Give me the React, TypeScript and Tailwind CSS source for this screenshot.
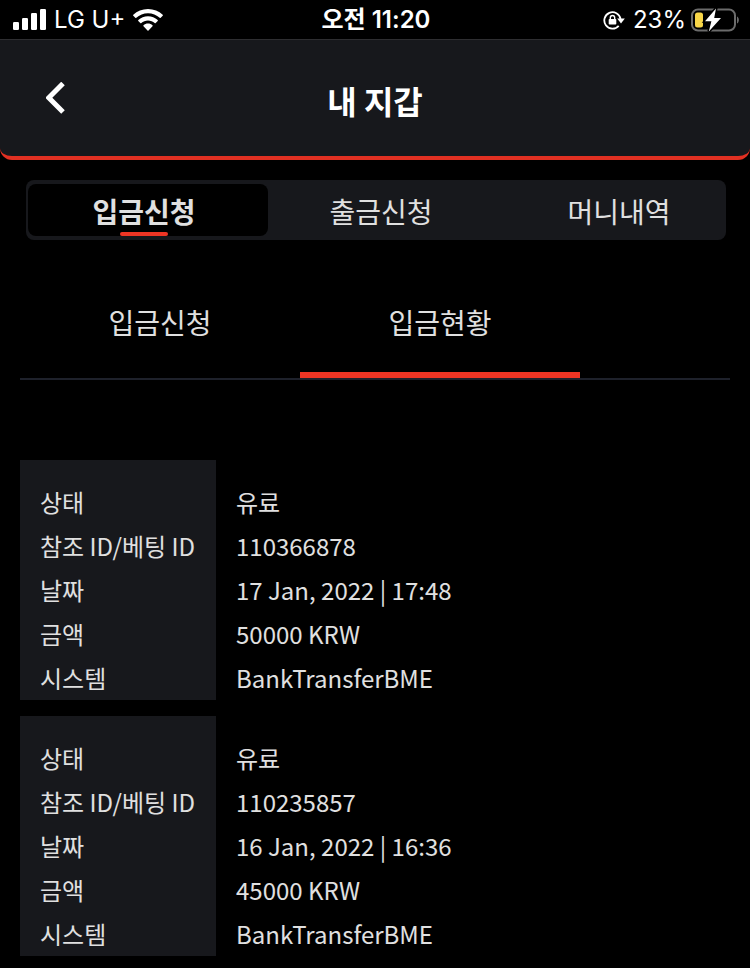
/**
 * Wallet page: deposit status list
 */

const TABS = [
  { label: "입금신청", active: true, className: "rounded-lg bg-black pr-2 font-bold" },
  { label: "출금신청", active: false, className: "" },
  { label: "머니내역", active: false, className: "pl-5" },
];

const SUB_TABS = [
  { label: "입금신청", active: false },
  { label: "입금현황", active: true },
];

const DEPOSITS = [
  { status: "유료", id: "110366878", date: "17 Jan, 2022 | 17:48", amount: "50000 KRW", system: "BankTransferBME" },
  { status: "유료", id: "110235857", date: "16 Jan, 2022 | 16:36", amount: "45000 KRW", system: "BankTransferBME" },
];

function StatusBar() {
  return (
    <div className="grid h-10 grid-cols-[1fr_auto_1fr] items-center border-b border-[#2e2e31] bg-black pr-2.5 pl-3 font-[Inter,'Noto_Sans_CJK_KR',sans-serif] text-2xl text-white">
      <div className="flex items-center gap-2">
        <svg className="h-6 w-[34px]" viewBox="0 0 34 24" fill="currentColor" aria-hidden="true">
          <rect x="1" y="14" width="6" height="8" rx="1.2" />
          <rect x="10" y="10" width="6" height="12" rx="1.2" />
          <rect x="19" y="5" width="6" height="17" rx="1.2" />
          <rect x="28" y="1" width="6" height="21" rx="1.2" />
        </svg>
        <span>LG U+</span>
        <svg className="h-[22px] w-[30px]" viewBox="0 0 30 22" fill="currentColor" aria-hidden="true">
          <path d="M15 0C9.300 0 4.100 2.200.3 5.800a.7.7 0 0 0 0 1l2 2c.3.300.7.300 1 0C6.400 5.900 10.500 4.200 15 4.200s8.600 1.700 11.700 4.600c.3.300.7.300 1 0l2-2c.3-.3.300-.7 0-1C25.900 2.200 20.700 0 15 0Z" />
          <path d="M15 7.300c-3.700 0-7.100 1.400-9.700 3.700-.3.300-.3.700 0 1l2 2c.3.300.7.300 1 0 1.800-1.600 4.100-2.500 6.700-2.500s4.900.9 6.700 2.500c.3.300.7.300 1 0l2-2c.3-.3.300-.7 0-1-2.600-2.300-6-3.700-9.700-3.700Z" />
          <path d="M15 14.600c-1.700 0-3.300.6-4.500 1.600-.3.300-.3.700 0 1l4 4.200c.3.300.7.300 1 0l4-4.200c.3-.3.300-.7 0-1-1.200-1-2.800-1.600-4.500-1.600Z" />
        </svg>
      </div>
      <span className="font-semibold">오전 11:20</span>
      <div className="flex items-center justify-end gap-1">
        <svg className="mr-1 h-5 w-[22px]" viewBox="0 0 22 20" fill="none" stroke="currentColor" strokeWidth="1.8" aria-hidden="true">
          <path d="M17.600 9A8.200 8.200 0 1 0 15.700 15.800" />
          <path d="M14.200 8.500h7.600L18 13.600Z" fill="currentColor" stroke="none" />
          <rect x="5.700" y="9" width="7.600" height="5.600" rx=".8" fill="currentColor" stroke="none" />
          <path d="M7.300 9.500V7.700a2.200 2.200 0 0 1 4.400 0v1.800" strokeWidth="1.400" />
        </svg>
        <span>23%</span>
        <svg className="h-6 w-[50px]" viewBox="0 0 50 24" aria-hidden="true">
          <rect x="2" y="1.500" width="43" height="21" rx="6" fill="none" stroke="#6b6b6b" strokeWidth="2" />
          <path d="M47 8.500c2.500 1.200 2.500 5.800 0 7Z" fill="#6b6b6b" />
          <rect x="5" y="4.500" width="8" height="15" rx="2.500" fill="#f8d648" />
          <path d="M26 .5 15 13.200h6.400L18.800 23.500 31 10h-6.800Z" fill="#fff" stroke="#000" strokeWidth="3" paintOrder="stroke" />
        </svg>
      </div>
    </div>
  );
}

function DepositCard({ deposit }: { deposit: (typeof DEPOSITS)[number] }) {
  const rows = [
    ["상태", deposit.status],
    ["참조 ID/베팅 ID", deposit.id],
    ["날짜", deposit.date],
    ["금액", deposit.amount],
    ["시스템", deposit.system],
  ];

  return (
    <table className="w-full border-collapse text-left text-2xl">
      <tbody>
        {rows.map(([label, value]) => (
          <tr key={label} className="group">
            <th scope="row" className="w-[196px] bg-[#17181c] pl-5 font-normal whitespace-nowrap group-first:pt-5">
              <span className="block h-11 leading-[44px]">{label}</span>
            </th>
            <td className="pl-5 group-first:pt-5">
              <span className="block h-11 leading-[44px]">{value}</span>
            </td>
          </tr>
        ))}
      </tbody>
    </table>
  );
}

export default function App() {
  return (
    <div className="min-h-screen bg-black font-['Noto_Sans_CJK_KR',sans-serif] text-[#e0e0e0]">
      <StatusBar />

      {/* Header */}
      <header className="grid h-[120px] grid-cols-[1fr_auto_1fr] items-center rounded-b-xl border-b-4 border-[#e13022] bg-[#17181c] px-10 text-white">
        <button type="button" aria-label="뒤로" className="flex size-8 items-center justify-center">
          <svg className="h-8 w-5" viewBox="0 0 20 32" fill="none" stroke="currentColor" strokeWidth="5" aria-hidden="true">
            <path d="M17 1.500 2.800 15.700 17 30" />
          </svg>
        </button>
        <h1 className="pt-1 text-[32px] font-bold">내 지갑</h1>
      </header>

      {/* Main tabs */}
      <nav className="mt-5 mr-6 ml-[26px] grid h-[60px] grid-cols-[240fr_226fr_230fr] rounded-lg bg-[#17181c] px-0.5 py-1 text-[28px]">
        {TABS.map((tab) => (
          <button key={tab.label} type="button" className={`flex items-center justify-center ${tab.className}`}>
            <span className="relative flex h-full items-center justify-center pt-0.5">
              {tab.label}
              {tab.active && <span className="absolute bottom-0 h-1 w-12 rounded-full bg-[#ee3524]" />}
            </span>
          </button>
        ))}
      </nav>

      {/* Sub tabs */}
      <div className="mx-5 mt-8 flex border-b-2 border-[#1e212b] text-[28px]">
        {SUB_TABS.map((tab) => (
          <button
            key={tab.label}
            type="button"
            className={`h-[106px] w-[280px] border-b-[6px] ${tab.active ? "border-[#ee3524]" : "border-transparent"}`}
          >
            {tab.label}
          </button>
        ))}
      </div>

      {/* Deposit history */}
      <main className="mt-20 flex flex-col gap-4 px-5 pb-3">
        {DEPOSITS.map((deposit) => (
          <DepositCard key={deposit.id} deposit={deposit} />
        ))}
      </main>
    </div>
  );
}
